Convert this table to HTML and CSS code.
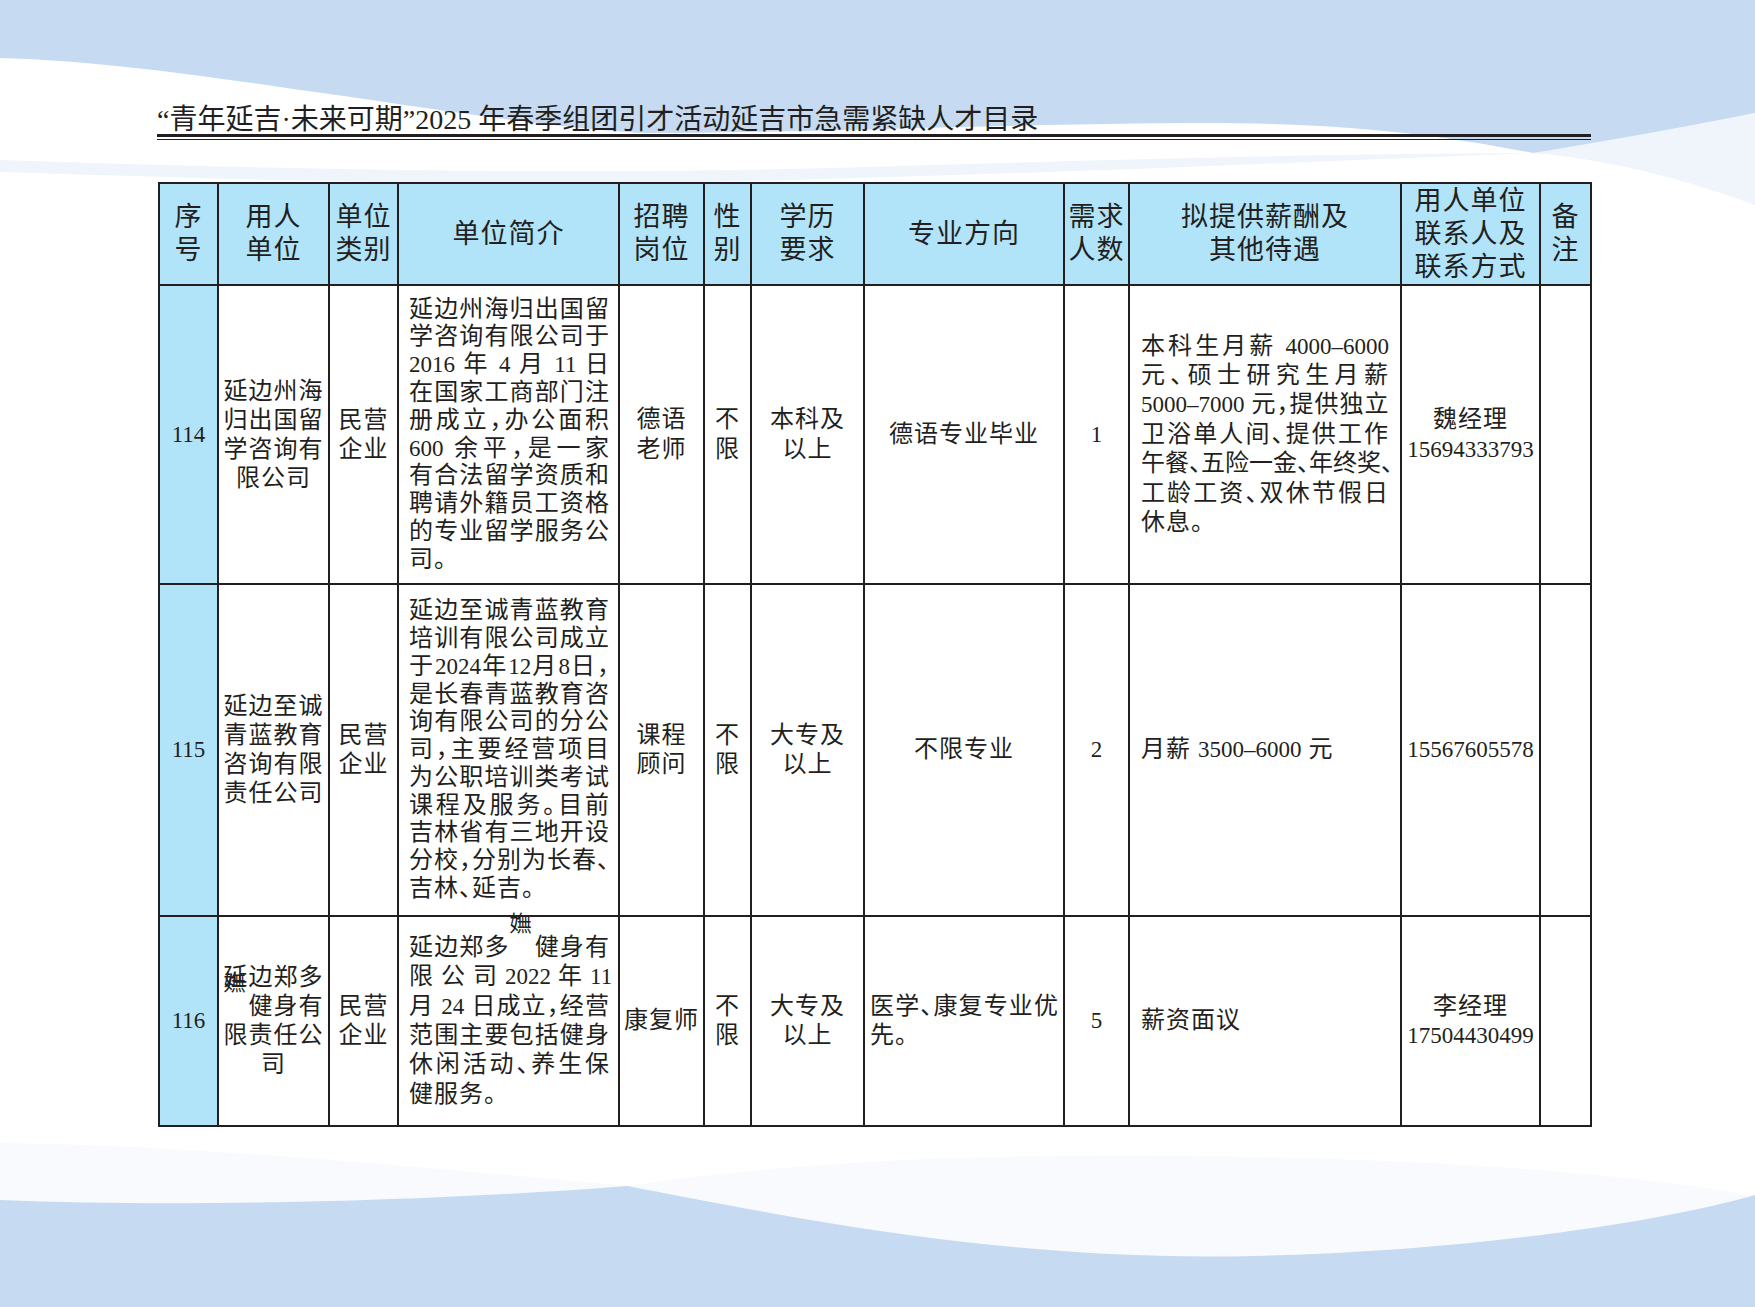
FILE: index.html
```html
<!DOCTYPE html>
<html lang="zh-CN">
<head>
<meta charset="utf-8">
<title>延吉市急需紧缺人才目录</title>
<link rel="stylesheet" href="styles.css">
</head>
<body>
<div class="page">
  <svg class="bg" viewBox="0 0 1755 1307" width="1755" height="1307" aria-hidden="true">
    <path class="wash" d="M1533,153 C1620,160 1700,185 1755,205 V113 Z"/>
    <path class="wash" d="M0,160 C300,170 600,176 900,166 C1100,160 1300,154 1533,153 C1300,162 1000,176 700,182 C400,186 200,178 0,172 Z"/>
    <path class="wave" d="M0,0 H1755 V113 C1680,128 1600,142 1533,153 C1420,131 1330,123 1200,123 C1000,124 800,133 640,133 C520,125 400,103 300,90 C180,72 80,60 0,58 Z"/>
    <path class="wash faint" d="M0,1143 C200,1145 450,1170 627,1186 C800,1160 1000,1152 1254,1157 C1500,1162 1680,1180 1755,1197 V1307 H0 Z"/>
    <path class="wave" d="M0,1200 C200,1208 450,1200 627,1186 C780,1215 1000,1262 1254,1256 C1450,1252 1650,1225 1755,1195 V1307 H0 Z"/>
  </svg>
  <main class="sheet">
    <h1 class="title">“青年延吉·未来可期”2025 年春季组团引才活动延吉市急需紧缺人才目录</h1>
    <div class="rule"></div>
    <table class="grid">
      <colgroup>
        <col class="w-seq"><col class="w-unit"><col class="w-type"><col class="w-intro">
        <col class="w-job"><col class="w-sex"><col class="w-edu"><col class="w-major">
        <col class="w-num"><col class="w-pay"><col class="w-contact"><col class="w-note">
      </colgroup>
      <thead>
        <tr class="r-head">
          <th>序<br>号</th>
          <th>用人<br>单位</th>
          <th>单位<br>类别</th>
          <th>单位简介</th>
          <th>招聘<br>岗位</th>
          <th>性<br>别</th>
          <th>学历<br>要求</th>
          <th>专业方向</th>
          <th>需求<br>人数</th>
          <th>拟提供薪酬及<br>其他待遇</th>
          <th>用人单位<br>联系人及<br>联系方式</th>
          <th>备<br>注</th>
        </tr>
      </thead>
      <tbody>
        <tr class="r-1">
          <td class="seq">114</td>
          <td class="unit">延边州海<br>归出国留<br>学咨询有<br>限公司</td>
          <td class="unit">民营<br>企业</td>
          <td class="intro">
            <span class="ln">延边州海归出国留</span>
            <span class="ln">学咨询有限公司于</span>
            <span class="ln"><span class="n">2016</span> 年 <span class="n">4</span> 月 <span class="n">11</span> 日</span>
            <span class="ln">在国家工商部门注</span>
            <span class="ln">册成立，办公面积</span>
            <span class="ln"><span class="n">600</span> 余平，是一家</span>
            <span class="ln">有合法留学资质和</span>
            <span class="ln">聘请外籍员工资格</span>
            <span class="ln">的专业留学服务公</span>
            <span class="ln end">司。</span>
          </td>
          <td class="cell">德语<br>老师</td>
          <td class="cell">不<br>限</td>
          <td class="cell">本科及<br>以上</td>
          <td class="cell">德语专业毕业</td>
          <td class="num">1</td>
          <td class="pay">
            <span class="ln">本科生月薪 <span class="n">4000–6000</span></span>
            <span class="ln">元、硕士研究生月薪</span>
            <span class="ln"><span class="n">5000–7000</span> 元，提供独立</span>
            <span class="ln">卫浴单人间、提供工作</span>
            <span class="ln tight">午餐、五险一金、年终奖、</span>
            <span class="ln">工龄工资、双休节假日</span>
            <span class="ln end">休息。</span>
          </td>
          <td class="cell">魏经理<br><span class="n">15694333793</span></td>
          <td class="cell"></td>
        </tr>
        <tr class="r-2">
          <td class="seq">115</td>
          <td class="unit">延边至诚<br>青蓝教育<br>咨询有限<br>责任公司</td>
          <td class="unit">民营<br>企业</td>
          <td class="intro">
            <span class="ln">延边至诚青蓝教育</span>
            <span class="ln">培训有限公司成立</span>
            <span class="ln">于<span class="n">2024</span>年<span class="n">12</span>月<span class="n">8</span>日，</span>
            <span class="ln">是长春青蓝教育咨</span>
            <span class="ln">询有限公司的分公</span>
            <span class="ln">司，主要经营项目</span>
            <span class="ln">为公职培训类考试</span>
            <span class="ln">课程及服务。目前</span>
            <span class="ln">吉林省有三地开设</span>
            <span class="ln">分校，分别为长春、</span>
            <span class="ln end">吉林、延吉。</span>
          </td>
          <td class="cell">课程<br>顾问</td>
          <td class="cell">不<br>限</td>
          <td class="cell">大专及<br>以上</td>
          <td class="cell">不限专业</td>
          <td class="num">2</td>
          <td class="pay">月薪 <span class="n">3500–6000</span> 元</td>
          <td class="num">15567605578</td>
          <td class="cell"></td>
        </tr>
        <tr class="r-3">
          <td class="seq">116</td>
          <td class="unit">延边郑多<br><span class="rare"><span class="rare-g">嫵</span></span>健身有<br>限责任公<br>司</td>
          <td class="unit">民营<br>企业</td>
          <td class="intro airy">
            <span class="ln">延边郑多<span class="rare"><span class="rare-g">嫵</span></span>健身有</span>
            <span class="ln">限 公 司 <span class="n">2022</span> 年 <span class="n">11</span></span>
            <span class="ln">月 <span class="n">24</span> 日成立，经营</span>
            <span class="ln">范围主要包括健身</span>
            <span class="ln">休闲活动、养生保</span>
            <span class="ln end">健服务。</span>
          </td>
          <td class="cell">康复师</td>
          <td class="cell">不<br>限</td>
          <td class="cell">大专及<br>以上</td>
          <td class="major-l">
            <span class="ln">医学、康复专业优</span>
            <span class="ln end">先。</span>
          </td>
          <td class="num">5</td>
          <td class="pay">薪资面议</td>
          <td class="cell">李经理<br><span class="n">17504430499</span></td>
          <td class="cell"></td>
        </tr>
      </tbody>
    </table>
  </main>
</div>
</body>
</html>
```

FILE: styles.css
```css
* {
  box-sizing: border-box;
}

body {
  margin: 0;
  background: #ffffff;
  color: #231f20;
  font-family: "Liberation Serif", "Noto Sans CJK SC", serif;
  font-feature-settings: "halt";
}

.page {
  position: relative;
  width: 1755px;
  height: 1307px;
  overflow: hidden;
  background: #ffffff;
}

.bg {
  position: absolute;
  left: 0;
  top: 0;
  z-index: 0;
}

.wave {
  fill: #c6dbf2;
}

.wash {
  fill: #f0f5fb;
}

.wash.faint {
  fill: #f8fafd;
}

.sheet {
  position: relative;
  z-index: 1;
  padding: 103px 0 0 157px;
}

.title {
  margin: 0;
  height: 31px;
  font-size: 28px;
  font-weight: 400;
  line-height: 34px;
  white-space: nowrap;
}

.rule {
  width: 1434px;
  height: 6px;
  border-top: 3px solid #231f20;
  border-bottom: 1px solid #231f20;
}

.grid {
  margin: 42px 0 0 1px;
  width: 1432px;
  border-collapse: collapse;
  table-layout: fixed;
}

.w-seq { width: 59px; }
.w-unit { width: 111px; }
.w-type { width: 69px; }
.w-intro { width: 221px; }
.w-job { width: 85px; }
.w-sex { width: 47px; }
.w-edu { width: 113px; }
.w-major { width: 200px; }
.w-num { width: 65px; }
.w-pay { width: 272px; }
.w-contact { width: 139px; }
.w-note { width: 51px; }

.r-head { height: 102px; }
.r-1 { height: 299px; }
.r-2 { height: 332px; }
.r-3 { height: 210px; }

th,
td {
  border: 2px solid #231f20;
  padding: 0;
  vertical-align: middle;
  text-align: center;
  font-weight: 400;
  overflow: visible;
}

th {
  background: #b2e4f9;
  font-size: 27px;
  letter-spacing: 1px;
  line-height: 33px;
}

td {
  font-size: 24px;
  letter-spacing: 1px;
  line-height: 29.5px;
}

td.seq {
  background: #b2e4f9;
  font-size: 23px;
  letter-spacing: 0;
}

td.num {
  font-size: 23px;
  letter-spacing: 0;
}

td.unit {
  line-height: 29px;
}

.n {
  font-size: 23px;
  letter-spacing: 0;
}

td.intro {
  padding: 0 8px 0 10px;
  text-align: left;
  line-height: 27.8px;
}

td.intro.airy {
  line-height: 29.3px;
}

td.pay {
  padding: 0 11px;
  text-align: left;
  line-height: 29.4px;
}

td.major-l {
  padding: 0 4px 0 5px;
  text-align: left;
}

.ln {
  display: block;
  white-space: nowrap;
  text-align: justify;
  text-align-last: justify;
}

.ln.end {
  text-align-last: left;
}

.ln.tight {
  letter-spacing: 0;
  text-align-last: left;
}

.rare {
  display: inline-block;
  width: 25px;
  text-align: left;
}

.rare-g {
  position: relative;
  top: -24px;
  font-size: 22px;
  letter-spacing: 0;
}
```
